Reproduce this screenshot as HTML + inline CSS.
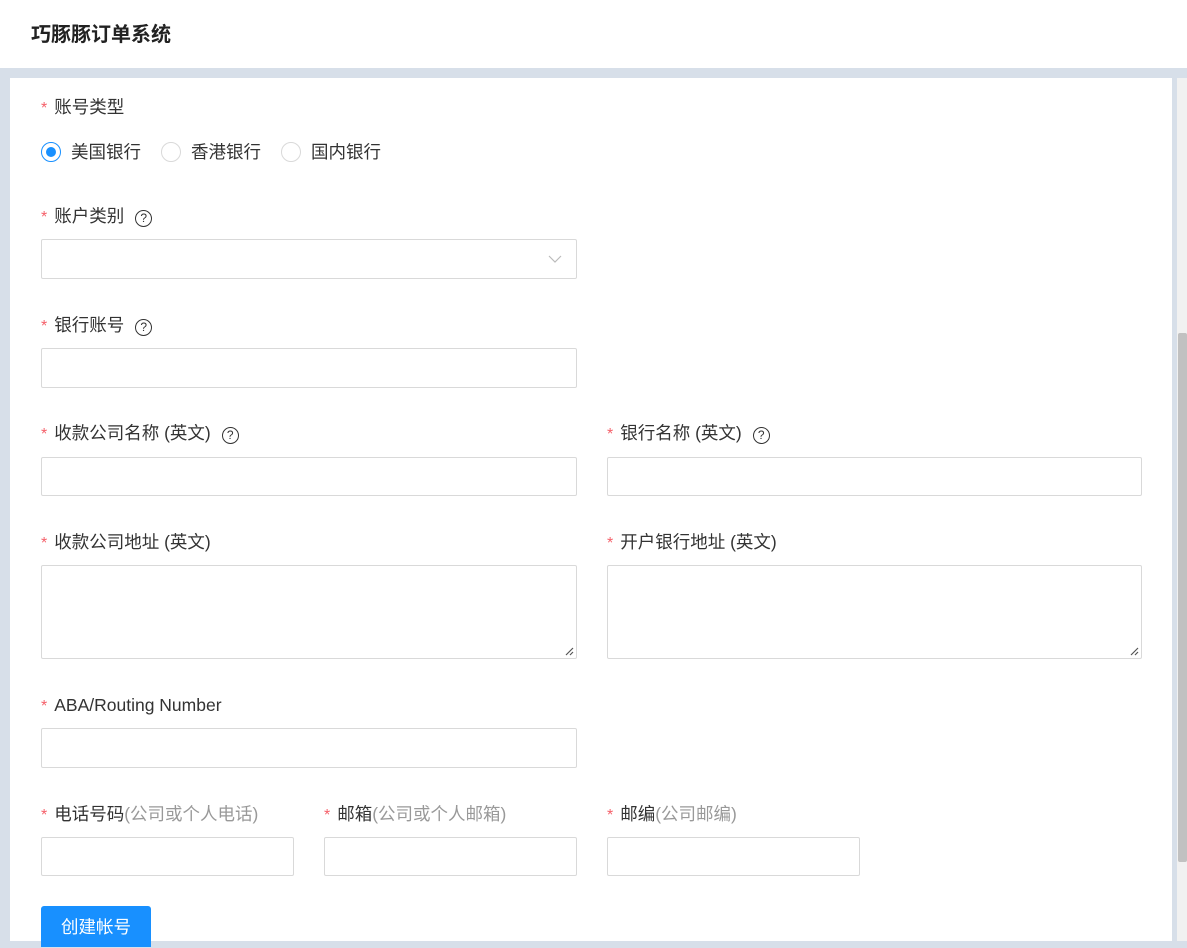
<!DOCTYPE html>
<html><head><meta charset="utf-8"><style>
*{box-sizing:border-box;margin:0;padding:0}
body{width:1187px;height:947px;overflow:hidden;background:#d7dfe9;font-family:"Liberation Sans","Noto Sans CJK SC",sans-serif;color:#333;font-size:17.5px;position:relative}
.hdr{position:absolute;left:0;top:0;width:1187px;height:68px;background:#fff}
.hdr span{position:absolute;left:31px;top:22px;font-size:20px;color:#222;font-weight:bold;line-height:26px}
.main{position:absolute;left:10px;top:78px;width:1162px;height:863px;background:#fff}
.track{position:absolute;left:1177px;top:78px;width:10px;height:863px;background:#f1f1f1}
.thumb{position:absolute;left:1178px;top:333px;width:9px;height:529px;background:#c1c1c1;border-radius:2px}
.lbl{position:absolute;line-height:24px;white-space:nowrap}
.lbl i{font-style:normal;color:#f5606a;margin-right:7px;font-family:"Liberation Sans",sans-serif;font-size:16px}
.lbl em{font-style:normal;color:#999}
.q{display:inline-block;width:17px;height:17px;border:1px solid #333;border-radius:50%;font-size:12px;line-height:15px;text-align:center;vertical-align:0px;margin-left:11px}
.in{position:absolute;border:1px solid #d9d9d9;border-radius:2px;background:#fff}
.rad{position:absolute;top:142px;width:20px;height:20px;border:1px solid #d9d9d9;border-radius:50%}
.rad.on{border-color:#1890ff}
.rad.on::after{content:"";position:absolute;left:4px;top:4px;width:10px;height:10px;border-radius:50%;background:#1890ff}
.rt{position:absolute;top:140px;line-height:24px}
.btn{position:absolute;left:41px;top:906px;width:110px;height:41px;background:#1890ff;color:#fff;border-radius:3px 3px 0 0;text-align:center;line-height:42px;font-size:17.5px}
</style></head><body>
<div class="hdr"><span>巧豚豚订单系统</span></div>
<div class="main"></div>
<div class="track"></div><div class="thumb"></div>

<div class="lbl" style="left:41px;top:95px"><i>*</i>账号类型</div>
<div class="rad on" style="left:41px"></div><div class="rt" style="left:71px">美国银行</div>
<div class="rad" style="left:161px"></div><div class="rt" style="left:191px">香港银行</div>
<div class="rad" style="left:281px"></div><div class="rt" style="left:311px">国内银行</div>

<div class="lbl" style="left:41px;top:204px"><i>*</i>账户类别<span class="q">?</span></div>
<div class="in" style="left:41px;top:239px;width:536px;height:40px">
<svg style="position:absolute;right:14px;top:14px" width="14" height="10" viewBox="0 0 14 10"><path d="M1 2 L7 8 L13 2" fill="none" stroke="#bbb" stroke-width="1.2"/></svg></div>

<div class="lbl" style="left:41px;top:313px"><i>*</i>银行账号<span class="q">?</span></div>
<div class="in" style="left:41px;top:348px;width:536px;height:40px"></div>

<div class="lbl" style="left:41px;top:421px"><i>*</i>收款公司名称 (英文)<span class="q">?</span></div>
<div class="in" style="left:41px;top:457px;width:536px;height:39px"></div>
<div class="lbl" style="left:607px;top:421px"><i>*</i>银行名称 (英文)<span class="q">?</span></div>
<div class="in" style="left:607px;top:457px;width:535px;height:39px"></div>

<div class="lbl" style="left:41px;top:530px"><i>*</i>收款公司地址 (英文)</div>
<div class="in" style="left:41px;top:565px;width:536px;height:94px"><svg style="position:absolute;right:2px;bottom:2px" width="9" height="9"><path d="M1 8 L8 1 M5 8 L8 5" stroke="#555" stroke-width="1.2"/></svg></div>
<div class="lbl" style="left:607px;top:530px"><i>*</i>开户银行地址 (英文)</div>
<div class="in" style="left:607px;top:565px;width:535px;height:94px"><svg style="position:absolute;right:2px;bottom:2px" width="9" height="9"><path d="M1 8 L8 1 M5 8 L8 5" stroke="#555" stroke-width="1.2"/></svg></div>

<div class="lbl" style="left:41px;top:693px"><i>*</i>ABA/Routing Number</div>
<div class="in" style="left:41px;top:728px;width:536px;height:40px"></div>

<div class="lbl" style="left:41px;top:802px"><i>*</i>电话号码<em>(公司或个人电话)</em></div>
<div class="in" style="left:41px;top:837px;width:253px;height:39px"></div>
<div class="lbl" style="left:324px;top:802px"><i>*</i>邮箱<em>(公司或个人邮箱)</em></div>
<div class="in" style="left:324px;top:837px;width:253px;height:39px"></div>
<div class="lbl" style="left:607px;top:802px"><i>*</i>邮编<em>(公司邮编)</em></div>
<div class="in" style="left:607px;top:837px;width:253px;height:39px"></div>

<div class="btn">创建帐号</div>
</body></html>
